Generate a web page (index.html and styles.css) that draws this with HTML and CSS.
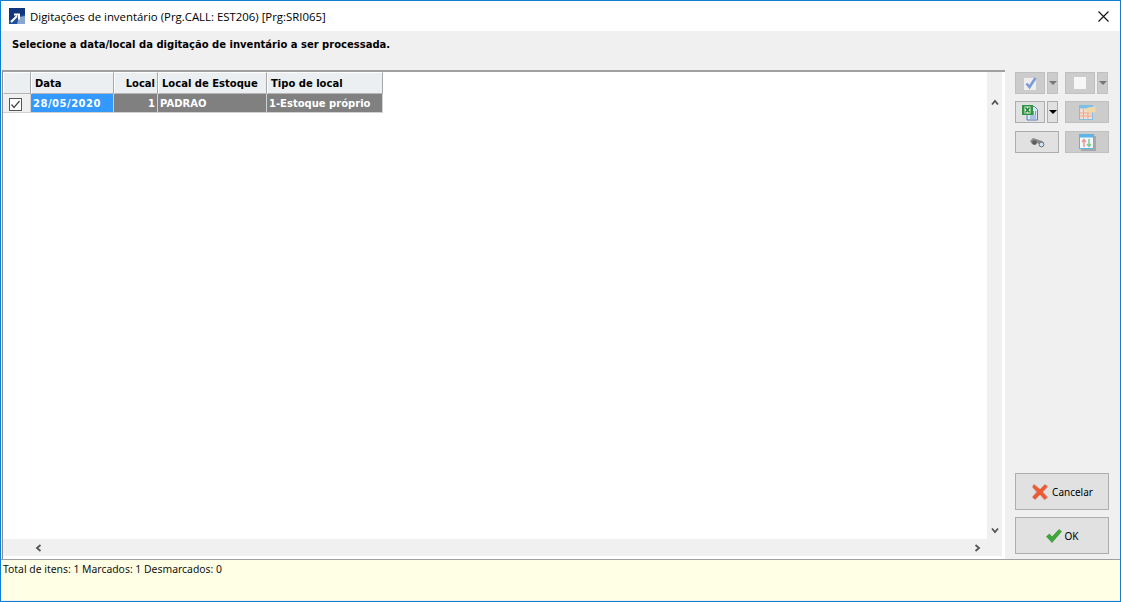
FILE: index.html
```html
<!DOCTYPE html>
<html lang="pt-BR">
<head>
  <meta charset="UTF-8" />
  <title>Digitações de inventário</title>
  <link rel="stylesheet" href="styles.css">
</head>
<body>
  <div class="window">
    <div class="titlebar">
      <svg class="app-icon" width="16" height="16" viewBox="0 0 16 16">
        <rect width="16" height="16" fill="#1c4f9c"/>
        <path d="M0 0H16V6L8 9L0 12Z" fill="#12367c"/>
        <path d="M10 9L16 8V16H8Z" fill="#8aa6d0"/>
        <path d="M2 14L8 8M5 6.500H10V11.500" fill="none" stroke="#fff" stroke-width="2"/>
      </svg>
      <span class="title">Digitações de inventário (Prg.CALL: EST206) [Prg:SRI065]</span>
      <svg class="close-icon" width="11" height="11" viewBox="0 0 11 11">
        <path d="M0.500 0.500L10.500 10.500M10.500 0.500L0.500 10.500" stroke="#111" stroke-width="1.100" fill="none"/>
      </svg>
    </div>

    <div class="hint">Selecione a data/local da digitação de inventário a ser processada.</div>

    <div class="content">
      <div class="grid-area">
        <div class="grid-main">
          <div class="grid-view">
            <table class="grid">
              <thead>
                <tr>
                  <th class="col-check"></th>
                  <th class="col-date">Data</th>
                  <th class="col-local num">Local</th>
                  <th class="col-stock">Local de Estoque</th>
                  <th class="col-type">Tipo de local</th>
                </tr>
              </thead>
              <tbody>
                <tr>
                  <td class="cell-check">
                    <svg width="13" height="13" viewBox="0 0 13 13">
                      <rect x="0.500" y="0.500" width="12" height="12" fill="#fff" stroke="#555"/>
                      <path d="M2.500 6.500L5 9.500L10.500 3" fill="none" stroke="#444" stroke-width="1.200"/>
                    </svg>
                  </td>
                  <td class="cell-selected">28/05/2020</td>
                  <td class="num">1</td>
                  <td>PADRAO</td>
                  <td>1-Estoque próprio</td>
                </tr>
              </tbody>
            </table>
          </div>
          <div class="hscroll">
            <svg width="7" height="8" viewBox="0 0 7 8"><path d="M5.500 1L2 4L5.500 7" fill="none" stroke="#555" stroke-width="1.800"/></svg>
            <svg width="7" height="8" viewBox="0 0 7 8"><path d="M1.500 1L5 4L1.500 7" fill="none" stroke="#555" stroke-width="1.800"/></svg>
          </div>
        </div>
        <div class="vscroll">
          <svg width="8" height="7" viewBox="0 0 8 7"><path d="M1 5.500L4 2L7 5.500" fill="none" stroke="#555" stroke-width="1.800"/></svg>
          <svg width="8" height="7" viewBox="0 0 8 7"><path d="M1 1.500L4 5L7 1.500" fill="none" stroke="#555" stroke-width="1.800"/></svg>
        </div>
      </div>

      <div class="side">
        <div class="tools">
          <div class="tool-row">
            <button class="tool split off">
              <svg width="15" height="15" viewBox="0 0 15 15">
                <rect x="1" y="2" width="12" height="12" fill="#eeeeee"/>
                <path d="M3.500 7.500L6.500 11L12.500 2" fill="none" stroke="#7b9cd6" stroke-width="2.600"/>
              </svg>
            </button>
            <button class="drop off"><i class="caret"></i></button>
            <button class="tool split off gap">
              <svg width="14" height="14" viewBox="0 0 14 14"><rect x="1" y="1" width="12" height="12" fill="#f7f7f7"/></svg>
            </button>
            <button class="drop off"><i class="caret"></i></button>
          </div>
          <div class="tool-row">
            <button class="tool split">
              <svg width="17" height="17" viewBox="0 0 17 17">
                <path d="M5 2.500H12.500L15.500 5.500V16H5Z" fill="#dce7f5" stroke="#5a7fb5"/>
                <path d="M8 12H14M8 14H14M11.500 7V11M13.500 7V11" stroke="#7d9ccc"/>
                <rect x="0" y="1" width="11" height="10" fill="#2f9443"/>
                <rect x="2.500" y="2.500" width="6" height="7" fill="#e8f3e4"/>
                <path d="M3.500 3.500L7.500 8.500M7.500 3.500L3.500 8.500" stroke="#1f7a35" stroke-width="1.400"/>
              </svg>
            </button>
            <button class="drop"><i class="caret"></i></button>
            <button class="tool wide off gap">
              <svg width="17" height="17" viewBox="0 0 17 17">
                <rect x="0.500" y="1.500" width="13" height="14" fill="#f6ddd2" stroke="#7cc0ea"/>
                <rect x="0.500" y="1.500" width="13" height="3" fill="#7cc0ea"/>
                <path d="M4.500 5V15M9 5V15M1 9H13M1 12H13" stroke="#eda78c"/>
                <path d="M6 5L11 3L16.500 3V8L11 9L8 8Z" fill="#efd9a6"/>
              </svg>
            </button>
          </div>
          <div class="tool-row">
            <button class="tool wide">
              <svg width="15" height="11" viewBox="0 0 15 11">
                <path d="M0 4L3 1L6 2L9 3L12 4L14 6L9 7L7 6L5 8L2 7Z" fill="#8a8a8a"/>
                <circle cx="4.500" cy="5.500" r="2.300" fill="#5c5c5c"/>
                <circle cx="11.500" cy="7.500" r="2.400" fill="#cfe2f6" stroke="#555" stroke-width="0.800"/>
              </svg>
            </button>
            <button class="tool wide off gap">
              <svg width="17" height="17" viewBox="0 0 17 17">
                <rect x="2" y="2" width="15" height="15" fill="#a8a8a8"/>
                <rect x="0.500" y="0.500" width="14" height="14" fill="#f2f9fe" stroke="#5fb4e6"/>
                <rect x="0.500" y="0.500" width="14" height="3" fill="#5fb4e6"/>
                <path d="M5 13V6M3 8L5 5.500L7 8" fill="none" stroke="#ee9b96" stroke-width="1.600"/>
                <path d="M10 5V12M8 10L10 12.500L12 10" fill="none" stroke="#85cc9a" stroke-width="1.600"/>
              </svg>
            </button>
          </div>
        </div>

        <div class="actions">
          <button class="action">
            <svg width="18" height="18" viewBox="0 0 18 18">
              <path d="M3 1L9 6L14 1L17 3.500L12 9L17 14.500L13.500 17L9 12L4 17L1 14L5.500 9L1 4Z" fill="#ee5a36" stroke="#c9c2b8" stroke-width="0.800"/>
            </svg>
            Cancelar
          </button>
          <button class="action">
            <svg width="16" height="14" viewBox="0 0 16 14">
              <path d="M0.500 7.500L3.500 5L6 8L13 0.500L15.500 2.500L6 13.500Z" fill="#3fa83a" stroke="#2e8a2c" stroke-width="0.600"/>
            </svg>
            OK
          </button>
        </div>
      </div>
    </div>

    <div class="status">Total de itens: 1 Marcados: 1 Desmarcados: 0</div>
  </div>
</body>
</html>
```

FILE: styles.css
```css
* {
  box-sizing: border-box;
}

html, body {
  margin: 0;
  padding: 0;
}

body {
  width: 1121px;
  height: 602px;
  overflow: hidden;
  font-family: "Noto Sans", "Liberation Sans", sans-serif;
  font-size: 11px;
  color: #000;
}

.window {
  display: flex;
  flex-direction: column;
  height: 100%;
  border: 1px solid #0f7ed0;
  background-color: #f0f0f0;
}

.titlebar {
  display: flex;
  align-items: center;
  height: 30px;
  flex: none;
  padding: 0 11px 0 8px;
  background-color: #fff;
}

.app-icon {
  margin-right: 5px;
}

.title {
  flex: 1;
  font-family: "Open Sans", sans-serif;
  font-size: 11.4px;
}

.hint {
  flex: none;
  height: 39px;
  padding: 8px 0 0 11px;
  font-family: "DejaVu Sans", sans-serif;
  font-size: 10px;
  font-weight: bold;
}

.content {
  display: flex;
  flex: 1;
  min-height: 0;
  padding-left: 1px;
}

.grid-area {
  display: flex;
  width: 1003px;
  padding-right: 3px;
  background-color: #fff;
  border-top: 2px solid #a0a0a0;
  border-left: 1px solid #8c8c8c;
}

.grid-main {
  display: flex;
  flex-direction: column;
  flex: 1;
  min-width: 0;
}

.grid-view {
  flex: 1;
  background-color: #fff;
}

.hscroll {
  display: flex;
  justify-content: space-between;
  align-items: center;
  flex: none;
  height: 17px;
  margin-bottom: 3px;
  padding: 0 6px 0 32px;
  background-color: #f0f0f0;
}

.vscroll {
  display: flex;
  flex-direction: column;
  justify-content: space-between;
  align-items: center;
  flex: none;
  width: 15px;
  margin-bottom: 3px;
  padding: 27px 0 22px;
  background-color: #f0f0f0;
}

.grid {
  table-layout: fixed;
  width: 380px;
  border-collapse: separate;
  border-spacing: 0;
  font-family: "DejaVu Sans", sans-serif;
  font-size: 10px;
}

.grid th {
  height: 22px;
  padding: 0 0 0 3px;
  text-align: left;
  font-weight: bold;
  background-color: #eceff1;
  border-top: 1px solid #fff;
  border-left: 1px solid #fff;
  border-right: 1px solid #a8a8a8;
  border-bottom: 1px solid #b5b5b5;
}

.grid td {
  height: 19px;
  padding: 0 1px 0 2px;
  font-weight: bold;
  color: #fff;
  white-space: nowrap;
  background-color: #808080;
  border-right: 1px solid #d0d0d0;
  border-bottom: 1px solid #d0d0d0;
}

.grid th.num, .grid td.num {
  text-align: right;
  padding-right: 2px;
}

.col-check { width: 28px; }
.col-date { width: 83px; }
.col-local { width: 44px; }
.col-stock { width: 109px; }
.col-type { width: 116px; }

.grid td.cell-check {
  padding: 2px 0 0 6px;
  line-height: 0;
  background-color: #f0f0f0;
}

.grid td.cell-selected {
  letter-spacing: 0.5px;
  background-color: #3399ff;
}

.side {
  display: flex;
  flex-direction: column;
  justify-content: space-between;
  flex: 1;
  padding: 2px 0 5px 10px;
}

.tool-row {
  display: flex;
  margin-bottom: 7px;
}

.tool-row:nth-child(2) {
  margin-bottom: 8px;
}

.tools button, .actions button {
  display: flex;
  align-items: center;
  justify-content: center;
  padding: 0;
  font-family: "Noto Sans", sans-serif;
  color: #000;
  background-color: #e1e1e1;
  border: 1px solid #adadad;
}

.tools button {
  height: 22px;
}

.tools .off {
  background-color: #cccccc;
  border-color: #c0c0c0;
}

.tools .split {
  width: 30px;
}

.tools .wide {
  width: 44px;
}

.tools .drop {
  width: 11px;
  margin-left: 2px;
}

.tools .gap {
  margin-left: 7px;
}

.tool-row:last-child .gap {
  margin-left: 6px;
}

.caret {
  width: 0;
  height: 0;
  border-left: 4px solid transparent;
  border-right: 4px solid transparent;
  border-top: 4px solid #000;
}

.off .caret {
  border-top-color: #777;
}

.actions button {
  gap: 3px;
  width: 94px;
  height: 37px;
  font-size: 10px;
}

.actions button + button {
  margin-top: 7px;
}

.status {
  flex: none;
  height: 42px;
  padding: 2px 0 0 2px;
  font-family: "Noto Sans", sans-serif;
  font-size: 10.4px;
  color: #111;
  background-color: #ffffe6;
  border-top: 1px solid #a0a0a0;
  border-bottom: 1px solid #f0f0f0;
}
```
